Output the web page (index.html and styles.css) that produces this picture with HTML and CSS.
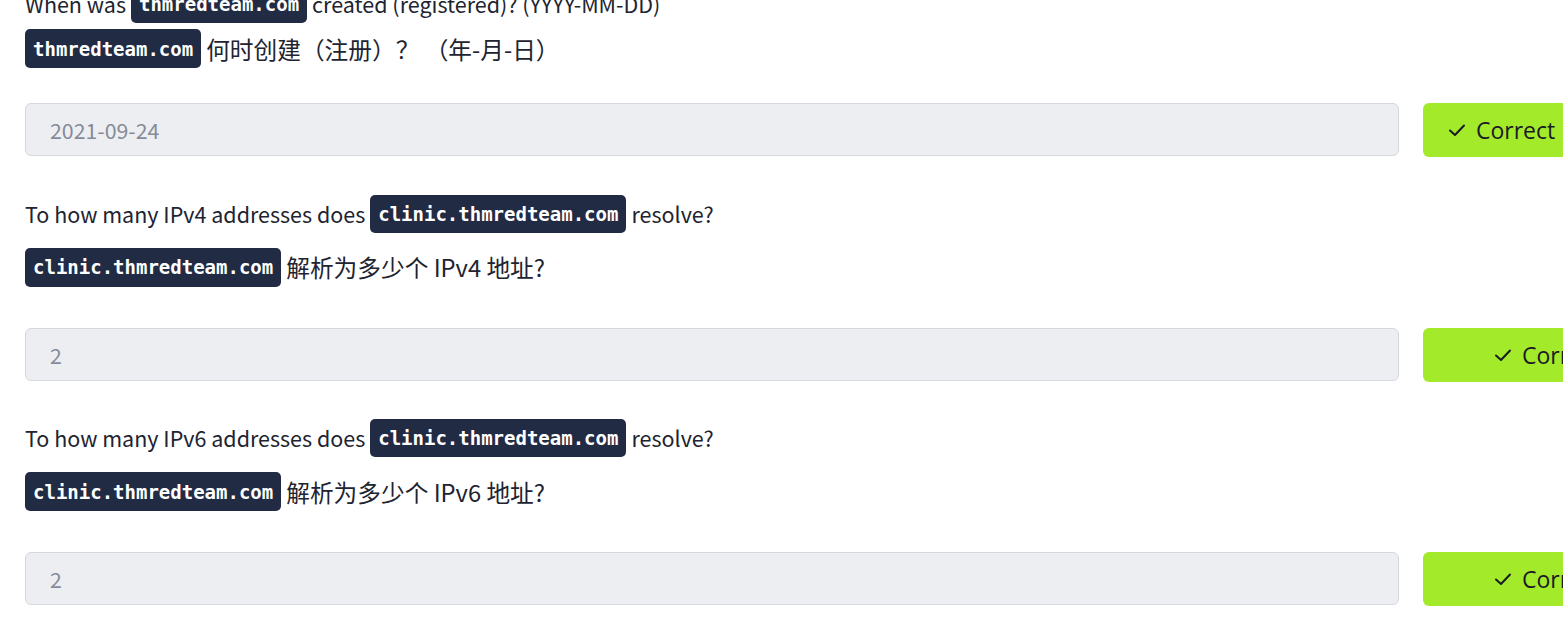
FILE: index.html
```html
<!DOCTYPE html>
<html lang="en">
<head>
<meta charset="utf-8">
<title>Questions</title>
<link rel="stylesheet" href="styles.css">
</head>
<body>
<div class="page">
  <section class="question question--first">
    <p class="q q-en"><span>When was</span><code>thmredteam.com</code><span>created (registered)? (YYYY-MM-DD)</span></p>
    <p class="q q-zh"><code>thmredteam.com</code><span>何时创建（注册）？ （年-月-日）</span></p>
    <div class="answer-row">
      <input class="answer" type="text" value="2021-09-24" readonly>
      <button class="btn" type="button"><svg class="check" viewBox="0 0 18 18" width="18" height="18"><path d="M2 9.5 L7 14 L16 4.5" fill="none" stroke="currentColor" stroke-width="2" stroke-linecap="round" stroke-linejoin="round"/></svg><span>Correct</span></button>
    </div>
  </section>
  <section class="question">
    <p class="q q-en"><span>To how many IPv4 addresses does</span><code>clinic.thmredteam.com</code><span>resolve?</span></p>
    <p class="q q-zh"><code>clinic.thmredteam.com</code><span>解析为多少个 IPv4 地址?</span></p>
    <div class="answer-row">
      <input class="answer" type="text" value="2" readonly>
      <button class="btn btn--wide" type="button"><svg class="check" viewBox="0 0 18 18" width="18" height="18"><path d="M2 9.5 L7 14 L16 4.5" fill="none" stroke="currentColor" stroke-width="2" stroke-linecap="round" stroke-linejoin="round"/></svg><span>Correct</span></button>
    </div>
  </section>
  <section class="question">
    <p class="q q-en"><span>To how many IPv6 addresses does</span><code>clinic.thmredteam.com</code><span>resolve?</span></p>
    <p class="q q-zh"><code>clinic.thmredteam.com</code><span>解析为多少个 IPv6 地址?</span></p>
    <div class="answer-row">
      <input class="answer" type="text" value="2" readonly>
      <button class="btn btn--wide" type="button"><svg class="check" viewBox="0 0 18 18" width="18" height="18"><path d="M2 9.5 L7 14 L16 4.5" fill="none" stroke="currentColor" stroke-width="2" stroke-linecap="round" stroke-linejoin="round"/></svg><span>Correct</span></button>
    </div>
  </section>
</div>
</body>
</html>
```

FILE: styles.css
```css
html, body {
  margin: 0;
  padding: 0;
  background: #ffffff;
  overflow: hidden;
}

body {
  font-family: "Noto Sans CJK SC", "Noto Sans", sans-serif;
  color: #212330;
}

.page {
  padding-left: 25px;
  margin-top: -15px;
}

.q {
  display: flex;
  align-items: center;
  gap: 5px;
  margin: 0;
  white-space: nowrap;
}

.q-en {
  font-size: 21.5px;
  line-height: 30px;
  margin-bottom: 15px;
}

.q-zh {
  font-size: 23.7px;
  line-height: 30px;
  margin-bottom: 41px;
}

.question--first .q-en {
  margin-bottom: 6px;
}

.question--first .q-zh {
  margin-bottom: 35px;
}

.q code {
  display: inline-flex;
  align-items: center;
  height: 38px;
  padding: 0 8px;
  background: #222b44;
  color: #ffffff;
  border-radius: 5px;
  font-family: "DejaVu Sans Mono", "Liberation Mono", monospace;
  font-weight: bold;
  font-size: 19px;
}

.q.q-zh code {
  height: 39px;
}

.answer-row {
  display: flex;
  gap: 24px;
  margin-bottom: 37.5px;
}

.answer {
  flex: none;
  box-sizing: border-box;
  width: 1374px;
  height: 53px;
  margin: 0;
  padding: 0 24px;
  background: #edeef2;
  border: 1px solid #d4d7dd;
  border-radius: 6px;
  font-family: "Noto Sans CJK SC", "Noto Sans", sans-serif;
  font-size: 21.3px;
  color: #858b98;
  outline: none;
}

.btn {
  flex: none;
  display: flex;
  align-items: center;
  gap: 10px;
  box-sizing: border-box;
  width: 260px;
  height: 54px;
  margin: 0;
  padding: 0 0 0 25px;
  background: #a3ea2a;
  border: none;
  border-radius: 6px;
  font-family: "Open Sans", "Noto Sans", sans-serif;
  font-size: 23px;
  color: #1b1b26;
}

.btn--wide {
  padding-left: 71px;
}

.check {
  flex: none;
}
```
